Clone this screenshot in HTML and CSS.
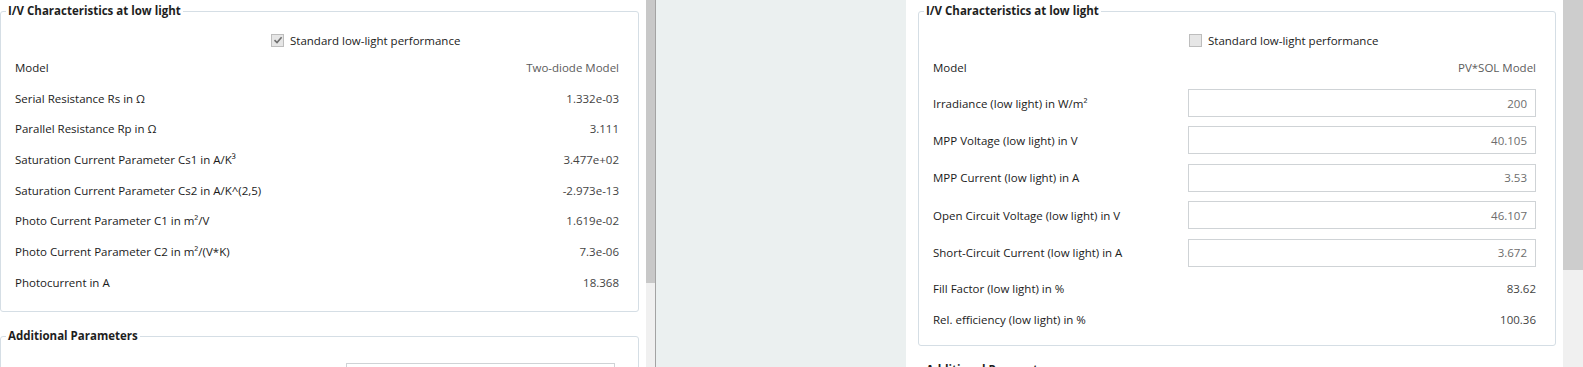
FILE: index.html
```html
<!DOCTYPE html>
<html lang="en">
<head>
    <meta charset="UTF-8">
    <meta name="viewport" content="width=device-width, initial-scale=1.0">
    <title>Module Editor - Low Light</title>
    <link rel="stylesheet" href="styles.css">
</head>
<body>

    <div class="window">
        <!-- Left pane: two-diode model -->
        <div class="pane pane-left">
            <fieldset class="group">
                <legend>I/V Characteristics at low light</legend>
                <div class="group-body">
                    <div class="check-row">
                        <span class="checkbox checked">
                            <svg width="10" height="10" viewBox="0 0 10 10"><path d="M1.5 5.2 L4 7.6 L8.6 2.2" fill="none" stroke="#6f6f6f" stroke-width="1.6"/></svg>
                        </span>
                        <span>Standard low-light performance</span>
                    </div>
                    <div class="row"><span>Model</span><span class="value muted">Two-diode Model</span></div>
                    <div class="row"><span>Serial Resistance Rs in Ω</span><span class="value">1.332e-03</span></div>
                    <div class="row"><span>Parallel Resistance Rp in Ω</span><span class="value">3.111</span></div>
                    <div class="row"><span>Saturation Current Parameter Cs1 in A/K³</span><span class="value">3.477e+02</span></div>
                    <div class="row"><span>Saturation Current Parameter Cs2 in A/K^(2,5)</span><span class="value">-2.973e-13</span></div>
                    <div class="row"><span>Photo Current Parameter C1 in m²/V</span><span class="value">1.619e-02</span></div>
                    <div class="row"><span>Photo Current Parameter C2 in m²/(V*K)</span><span class="value">7.3e-06</span></div>
                    <div class="row"><span>Photocurrent in A</span><span class="value">18.368</span></div>
                </div>
            </fieldset>
            <fieldset class="group next">
                <legend>Additional Parameters</legend>
                <div class="group-body">
                    <div class="extra-row"><span class="textbox short"></span></div>
                </div>
            </fieldset>
        </div>
        <div class="scrollbar thin"><div class="thumb"></div></div>
        <div class="divider"></div>
        <div class="gap"></div>

        <!-- Right pane: PV*SOL model -->
        <div class="pane pane-right">
            <fieldset class="group">
                <legend>I/V Characteristics at low light</legend>
                <div class="group-body right">
                    <div class="check-row">
                        <span class="checkbox"></span>
                        <span>Standard low-light performance</span>
                    </div>
                    <div class="row"><span>Model</span><span class="value muted">PV*SOL Model</span></div>
                    <div class="row input-row first"><span>Irradiance (low light) in W/m²</span><span class="textbox">200</span></div>
                    <div class="row input-row"><span>MPP Voltage (low light) in V</span><span class="textbox">40.105</span></div>
                    <div class="row input-row"><span>MPP Current (low light) in A</span><span class="textbox">3.53</span></div>
                    <div class="row input-row"><span>Open Circuit Voltage (low light) in V</span><span class="textbox">46.107</span></div>
                    <div class="row input-row"><span>Short-Circuit Current (low light) in A</span><span class="textbox">3.672</span></div>
                    <div class="row tall first"><span>Fill Factor (low light) in %</span><span class="value">83.62</span></div>
                    <div class="row tall"><span>Rel. efficiency (low light) in %</span><span class="value">100.36</span></div>
                </div>
            </fieldset>
            <fieldset class="group next-right">
                <legend>Additional Parameters</legend>
                <div class="group-body"></div>
            </fieldset>
        </div>
        <div class="scrollbar wide"><div class="thumb"></div></div>
    </div>

</body>
</html>
```

FILE: styles.css
```css
body {
    margin: 0;
    font-family: "Open Sans", "Liberation Sans", sans-serif;
    font-size: 11.5px;
    color: #1b1b1b;
    background: #ffffff;
}
.window {
    display: grid;
    grid-template-columns: 646px 9px 1px 250px 657px 20px;
    width: 1583px;
    height: 367px;
    overflow: hidden;
}
.pane {
    background: #ffffff;
    overflow: hidden;
}
.pane-left {
    padding-right: 7px;
}
.pane-right {
    padding-left: 12px;
    padding-right: 7px;
}
.gap {
    background: #ebf0f0; /* empty area between the two editors */
}
.divider {
    background: #a3a3a3;
}
.scrollbar {
    background: #f0f0f0;
}
.scrollbar.thin .thumb {
    height: 283px;
    background: #c8c8c8;
}
.scrollbar.wide .thumb {
    height: 270px;
    background: #cdcdcd;
}
.group {
    margin: 0;
    padding: 0;
    border: 1px solid #d5dee5;
    border-radius: 3px;
    min-width: 0;
}
.group legend {
    margin-left: 5px;
    padding: 0 2px;
    font-weight: bold;
    line-height: 22px;
    color: #1e1e1e;
}
.group.next {
    margin-top: 13px;
}
.group.next-right {
    margin-top: 13px;
}
.group-body {
    display: grid;
    grid-template-columns: 255px 1fr;
    padding: 6.3px 19px 14px 14px;
}
.group-body.right {
    padding-bottom: 10px;
}
.check-row {
    grid-column: 2;
    height: 24px;
    display: flex;
    align-items: center;
    gap: 6px;
    padding-left: 1px;
}
.checkbox {
    width: 11px;
    height: 11px;
    border: 1px solid #bdbdbd;
    background: #e6e6e6;
    display: flex;
    align-items: center;
    justify-content: center;
}
.row {
    display: contents;
}
.row > span {
    height: 30.65px;
    display: flex;
    align-items: center;
}
.row > .value {
    justify-content: flex-end;
    color: #444444;
}
.row > .value.muted {
    color: #5c5c5c;
}
.row.input-row > span:first-child {
    height: 37.35px;
}
.row.input-row.first > span {
    margin-top: 1.4px;
}
.row.input-row > .textbox {
    height: 28px;
    margin: 4.7px 0;
}
.row.input-row.first > .textbox {
    margin-top: 6.1px;
}
.row.tall > span {
    height: 31.3px;
}
.row.tall.first > span {
    margin-top: 1.4px;
}
.textbox {
    box-sizing: border-box;
    border: 1px solid #cfd3d6;
    background: #ffffff;
    color: #6d6d6d;
    padding: 0 8px;
    display: flex;
    align-items: center;
    justify-content: flex-end;
}
.extra-row {
    grid-column: 2;
    padding-top: 9px;
}
.textbox.short {
    width: 269px;
    height: 26px;
    margin-left: 76px;
}
```
